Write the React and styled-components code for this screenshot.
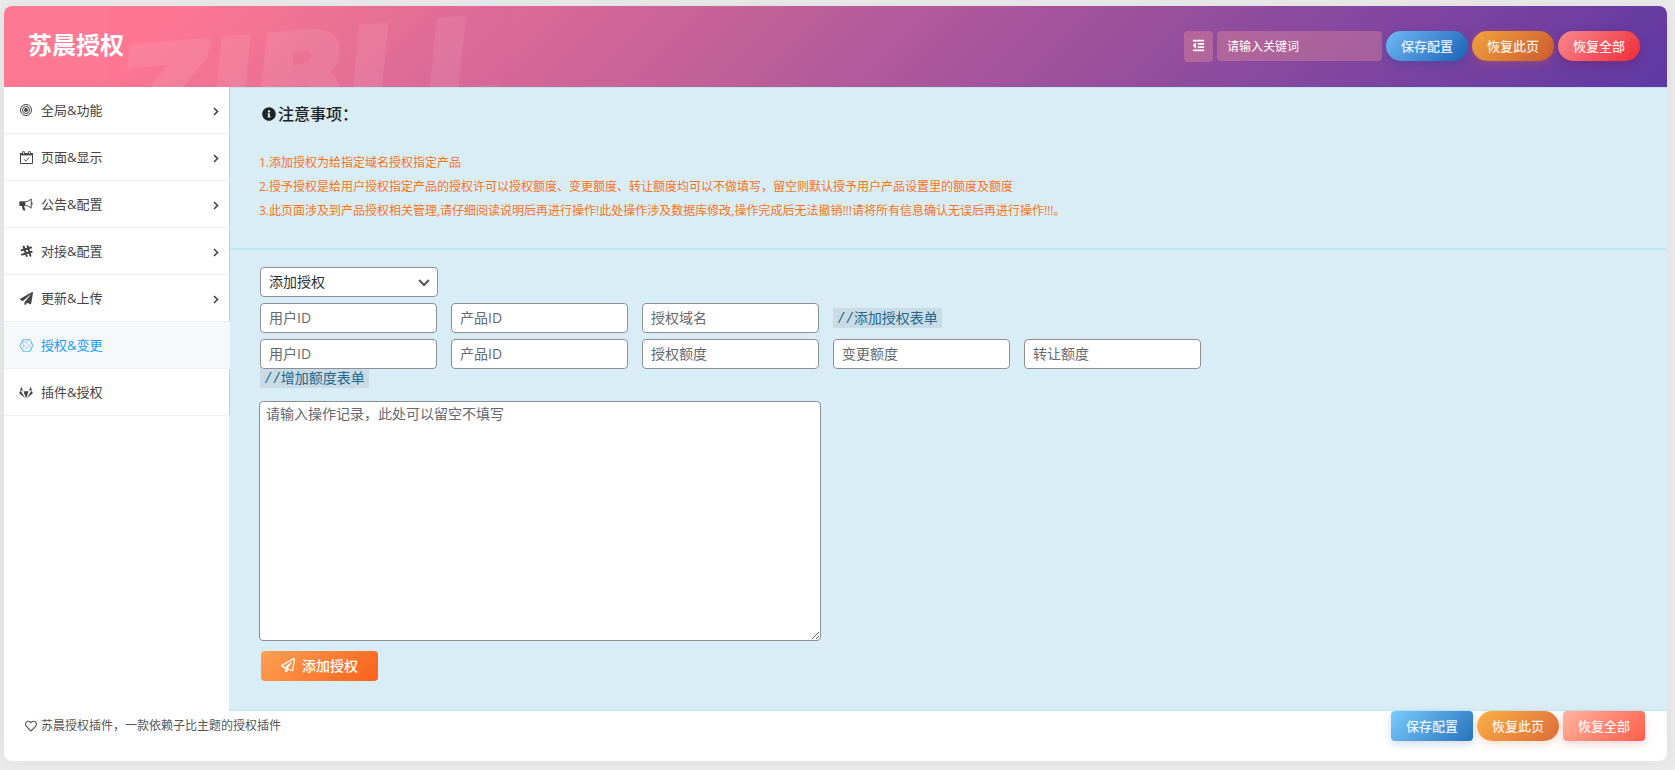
import React from 'react';
import styled, { createGlobalStyle, css } from 'styled-components';
import {
    FaConnectdevelop,
    FaInfoCircle,
    FaOutdent,
    FaPaperPlane,
    FaRegHeart,
    FaRegPaperPlane,
} from 'react-icons/fa';

const GlobalStyle = createGlobalStyle`
    * {
        box-sizing: border-box;
    }

    body {
        margin: 0;
        background: #ebebeb;
        color: #444;
        font-family: 'Open Sans', 'Noto Sans CJK SC', sans-serif;
        font-size: 13px;
    }

    button, input, select, textarea {
        margin: 0;
        font-family: inherit;
    }

    h1, h2, p {
        margin: 0;
    }
`;

const Page = styled.div`
    padding: 6px 8px 9px 4px;
`;

const Panel = styled.div`
    border-radius: 8px;
    background: #fff;
    box-shadow: 0 0 20px rgba(0, 0, 0, 0.06);
`;

const Header = styled.header`
    position: relative;
    display: flex;
    align-items: center;
    justify-content: space-between;
    height: 81px;
    padding: 0 27px 0 24px;
    overflow: hidden;
    border-radius: 8px 8px 0 0;
    background: linear-gradient(135deg, #fd7893 10%, #5f38a3 100%);

    @media only screen and (max-width: 640px) {
        height: auto;
        flex-direction: column;
        padding: 20px;
    }
`;

const Watermark = styled.span`
    position: absolute;
    left: 116px;
    top: 12px;
    color: #fff;
    font-family: 'DejaVu Sans', sans-serif;
    font-size: 122px;
    font-style: italic;
    font-weight: bold;
    line-height: 1;
    opacity: 0.08;
    transform: rotate(-5deg);
    pointer-events: none;
    -webkit-text-stroke: 6px #fff;
`;

const Title = styled.h1`
    position: relative;
    padding-bottom: 4px;
    color: #fff;
    font-size: 24px;
    font-weight: bold;
    line-height: 32px;
`;

const Tools = styled.div`
    position: relative;
    display: flex;
    flex-wrap: wrap;
    align-items: flex-start;
    gap: 4px;
`;

const ExpandButton = styled.button`
    display: flex;
    align-items: center;
    justify-content: center;
    width: 29px;
    height: 31px;
    padding: 0 0 2px;
    border: none;
    border-radius: 4px;
    background: rgba(255, 162, 150, 0.3);
    color: #fff;
    font-size: 13px;
    cursor: pointer;
`;

const Search = styled.input`
    width: 165px;
    height: 30px;
    padding: 0 10px;
    border: none;
    border-radius: 4px;
    background: rgba(255, 162, 150, 0.3);
    color: #fff;
    font-size: 12px;

    &::placeholder {
        color: #fff;
        opacity: 1;
    }
`;

const tones = {
    save: css`
        background: linear-gradient(135deg, #70baf6, #1a62b5);
        box-shadow: 0 3px 8px rgba(30, 70, 150, 0.35);
    `,
    page: css`
        background: linear-gradient(135deg, #f0a23c, #cd5a2f);
        box-shadow: 0 3px 8px rgba(210, 90, 60, 0.35);
    `,
    all: css`
        background: linear-gradient(135deg, #f88890, #ef2c36);
        box-shadow: 0 3px 8px rgba(120, 20, 80, 0.35);
    `,
    saveLight: css`
        background: linear-gradient(135deg, #7acbff, #2672ba);
        box-shadow: 0 3px 8px rgba(60, 110, 180, 0.25);
    `,
    pageLight: css`
        background: linear-gradient(135deg, #fbb044, #dc6b3a);
        box-shadow: 0 3px 8px rgba(230, 120, 60, 0.25);
    `,
    allLight: css`
        background: linear-gradient(135deg, #ffb3a0, #ff5e48);
        box-shadow: 0 3px 8px rgba(200, 80, 90, 0.25);
    `,
};

const Button = styled.button`
    width: 82px;
    height: 30px;
    padding: 0 0 2px;
    border: none;
    border-radius: ${(props) => (props.$round ? '15px' : '4px')};
    color: rgba(255, 255, 255, 0.9);
    font-size: 13px;
    font-weight: 500;
    cursor: pointer;
    ${(props) => tones[props.$tone]}
`;

const Body = styled.div`
    display: flex;

    @media only screen and (max-width: 640px) {
        flex-direction: column;
    }
`;

const Sidebar = styled.nav`
    flex: none;
    width: 225px;
`;

const MenuLink = styled.a`
    position: relative;
    display: flex;
    align-items: center;
    gap: 7px;
    height: 47px;
    margin-right: -1px;
    padding: 0 10px 2px 14px;
    border-right: 1px solid ${(props) => (props.$active ? '#f6f8fb' : '#c5ced4')};
    border-bottom: 1px solid #f1f1f1;
    background: ${(props) => (props.$active ? '#f6f8fb' : '#fff')};
    color: ${(props) => (props.$active ? '#1a9bfa' : '#444')};
    font-size: 13px;
    text-decoration: none;
`;

const MenuIcon = styled.span`
    display: flex;
    align-items: center;
    justify-content: center;
    width: 16px;
    padding-top: 2px;
    font-size: ${(props) => (props.$active ? '15px' : '13px')};
`;

const MenuText = styled.span`
    flex: 1;
`;

const Content = styled.main`
    flex: 1;
    min-width: 0;
    border-top: 1px solid #bce8f1;
    border-bottom: 1px solid #bce8f1;
    background: #d9edf7;
`;

const Notice = styled.section`
    padding: 14px 30px 25px;
    border-bottom: 2px solid #bce8f1;
`;

const NoticeTitle = styled.h2`
    display: flex;
    align-items: center;
    gap: 2px;
    margin-bottom: 25px;
    padding-left: 3px;
    color: #1d2327;
    font-size: 16px;
    font-weight: 500;
    line-height: 24px;

    svg {
        font-size: 14px;
    }
`;

const NoticeLine = styled.p`
    color: #fc7316;
    font-size: 12px;
    line-height: 24px;
`;

const Form = styled.form`
    display: flex;
    flex-direction: column;
    align-items: flex-start;
    padding: 17px 30px 29px;
`;

const FieldRow = styled.div`
    display: flex;
    flex-wrap: wrap;
    align-items: center;
    gap: 6px 14px;
    margin: 6px 0 0 1px;
`;

const SelectBox = styled.div`
    position: relative;
    width: 178px;
    margin-left: 1px;

    svg {
        position: absolute;
        right: 8px;
        top: 12px;
        pointer-events: none;
    }
`;

const field = css`
    border: 1px solid #8c8f94;
    border-radius: 4px;
    background: #fff;
    color: #2c3338;
    font-size: 14px;

    &::placeholder {
        color: #646970;
        opacity: 1;
    }
`;

const Select = styled.select`
    ${field}
    display: block;
    width: 100%;
    height: 30px;
    padding: 0 24px 2px 8px;
    appearance: none;
`;

const Input = styled.input`
    ${field}
    position: relative;
    z-index: 1;
    width: 177px;
    height: 30px;
    padding: 0 8px 2px;
`;

const Code = styled.code`
    height: 20px;
    padding: 0 4px;
    background: rgba(0, 0, 0, 0.07);
    color: #23688c;
    font-family: 'Liberation Mono', 'Noto Sans CJK SC', monospace;
    font-size: 14px;
    line-height: 22px;
`;

const CodeRow = styled.div`
    display: flex;
    margin: -1px 0 13px 1px;
`;

const Textarea = styled.textarea`
    ${field}
    width: 100%;
    max-width: 562px;
    height: 240px;
    padding: 2px 6px;
    line-height: 20px;
    resize: both;
`;

const Submit = styled.button`
    display: flex;
    align-items: center;
    justify-content: center;
    gap: 7px;
    width: 117px;
    height: 30px;
    margin: 10px 0 0 2px;
    padding: 0 0 2px;
    border: none;
    border-radius: 4px;
    background: linear-gradient(135deg, #fda153, #fa611b);
    color: #fff;
    font-size: 14px;
    font-weight: 500;
    cursor: pointer;
`;

const Footer = styled.footer`
    display: flex;
    flex-wrap: wrap;
    align-items: flex-start;
    justify-content: space-between;
    min-height: 50px;
    padding: 0 22px 0 21px;
`;

const Credit = styled.p`
    display: flex;
    align-items: center;
    gap: 4px;
    color: #555;
    font-size: 12px;
    line-height: 30px;
`;

const FooterButtons = styled.div`
    position: relative;
    display: flex;
    gap: 4px;
`;

const TargetIcon = () => (
    <svg width="12" height="12" viewBox="0 0 12 12" fill="none" stroke="currentColor">
        <circle cx="6" cy="6" r="5.5" />
        <circle cx="6" cy="6" r="3.5" />
        <circle cx="6" cy="6" r="2" fill="currentColor" stroke="none" />
    </svg>
);

const CalendarIcon = () => (
    <svg width="13" height="13" viewBox="0 0 13 13" fill="none" stroke="currentColor">
        <path d="M0.5 2.5h12v10h-12z" />
        <path d="M0 2h13v2.4h-13z" fill="currentColor" stroke="none" />
        <path d="M3.5 0.3v3M9.5 0.3v3" strokeWidth="2.4" />
        <path d="M3.5 1v2M9.5 1v2" stroke="#fff" strokeWidth="0.7" />
        <path d="M4 8.2l1.8 1.8 3.4-3.4" />
    </svg>
);

const HornIcon = () => (
    <svg width="14" height="13" viewBox="0 0 14 13">
        <path
            d="M1.3 3.2H6.4V8H5.2c-.3.8.2 1.2.5 1.7.3.4-.2.8.2 1.3.2.4.6.6.8.9-.8.7-2.2.7-2.8.2C3.5 10.8 2.8 9.5 3.1 8H1.3Q.3 8 .3 7V4.2q0-1 1-1z"
            fill="currentColor"
        />
        <path
            d="M6.5 3.7C9 3.4 10.8 2.3 12.2 1v9.2C10.8 8.9 9 7.8 6.5 7.5M13 4.3v2.5"
            fill="none"
            stroke="currentColor"
        />
    </svg>
);

const SlackIcon = () => (
    <svg width="13" height="13" viewBox="0 0 13 13" fill="none" stroke="currentColor" strokeWidth="2" strokeLinecap="round">
        <path d="M3.7 1.6l3 9.4M7.6 1.3l2.8 9.4M1.6 5.2l9.4-2.7M2 9.6l9.6-2.8" />
    </svg>
);

const FoxIcon = () => (
    <svg width="14" height="13" viewBox="0 0 14 13" fill="currentColor">
        <path d="M2.4.8L3.9 4.6H1z M11.6.8L13 4.6h-2.9z" />
        <path d="M.9 5.200L.2 7.300 6.200 12 1.900 5.200z M13.100 5.200l.7 2.100L7.800 12l4.300-6.800z" />
        <path d="M4.500 5.200h5L7 12.500z" />
    </svg>
);

const ArrowIcon = () => (
    <svg width="6" height="13" viewBox="0 0 6 13" fill="none" stroke="currentColor" strokeWidth="1.6">
        <path d="M1 5l3.500 3.500L1 12" />
    </svg>
);

const menu = [
    { text: '全局&功能', icon: <TargetIcon />, more: true },
    { text: '页面&显示', icon: <CalendarIcon />, more: true },
    { text: '公告&配置', icon: <HornIcon />, more: true },
    { text: '对接&配置', icon: <SlackIcon />, more: true },
    { text: '更新&上传', icon: <FaPaperPlane />, more: true },
    { text: '授权&变更', icon: <FaConnectdevelop />, active: true },
    { text: '插件&授权', icon: <FoxIcon /> },
];

const grantFields = ['用户ID', '产品ID', '授权域名'];
const quotaFields = ['用户ID', '产品ID', '授权额度', '变更额度', '转让额度'];

const App = () => {
    return (
        <Page>
            <GlobalStyle />
            <Panel>
                <Header>
                    <Watermark aria-hidden="true">ZIBLL</Watermark>
                    <Title>苏晨授权</Title>
                    <Tools>
                        <ExpandButton type="button" aria-label="展开"><FaOutdent /></ExpandButton>
                        <Search type="text" placeholder="请输入关键词" aria-label="请输入关键词" />
                        <Button type="button" $tone="save" $round>保存配置</Button>
                        <Button type="button" $tone="page" $round>恢复此页</Button>
                        <Button type="button" $tone="all" $round>恢复全部</Button>
                    </Tools>
                </Header>
                <Body>
                    <Sidebar>
                        {menu.map((item) => (
                            <MenuLink href="#" key={item.text} $active={item.active}>
                                <MenuIcon $active={item.active}>{item.icon}</MenuIcon>
                                <MenuText>{item.text}</MenuText>
                                {item.more && <ArrowIcon />}
                            </MenuLink>
                        ))}
                    </Sidebar>
                    <Content>
                        <Notice>
                            <NoticeTitle><FaInfoCircle />注意事项：</NoticeTitle>
                            <NoticeLine>1.添加授权为给指定域名授权指定产品</NoticeLine>
                            <NoticeLine>2.授予授权是给用户授权指定产品的授权许可以授权额度、变更额度、转让额度均可以不做填写，留空则默认授予用户产品设置里的额度及额度</NoticeLine>
                            <NoticeLine>3.此页面涉及到产品授权相关管理,请仔细阅读说明后再进行操作!此处操作涉及数据库修改,操作完成后无法撤销!!!请将所有信息确认无误后再进行操作!!!。</NoticeLine>
                        </Notice>
                        <Form>
                            <SelectBox>
                                <Select aria-label="操作类型">
                                    <option>添加授权</option>
                                </Select>
                                <svg width="12" height="8" viewBox="0 0 12 8" fill="none" stroke="#50575e" strokeWidth="2">
                                    <path d="M1 1l5 5 5-5" />
                                </svg>
                            </SelectBox>
                            <FieldRow>
                                {grantFields.map((name) => (
                                    <Input type="text" key={name} placeholder={name} aria-label={name} />
                                ))}
                                <Code>//添加授权表单</Code>
                            </FieldRow>
                            <FieldRow>
                                {quotaFields.map((name) => (
                                    <Input type="text" key={name} placeholder={name} aria-label={name} />
                                ))}
                            </FieldRow>
                            <CodeRow>
                                <Code>//增加额度表单</Code>
                            </CodeRow>
                            <Textarea placeholder="请输入操作记录，此处可以留空不填写" aria-label="操作记录" />
                            <Submit type="button"><FaRegPaperPlane />添加授权</Submit>
                        </Form>
                    </Content>
                </Body>
                <Footer>
                    <Credit><FaRegHeart />苏晨授权插件，一款依赖子比主题的授权插件</Credit>
                    <FooterButtons>
                        <Button type="button" $tone="saveLight">保存配置</Button>
                        <Button type="button" $tone="pageLight" $round>恢复此页</Button>
                        <Button type="button" $tone="allLight">恢复全部</Button>
                    </FooterButtons>
                </Footer>
            </Panel>
        </Page>
    );
};

export default App;
